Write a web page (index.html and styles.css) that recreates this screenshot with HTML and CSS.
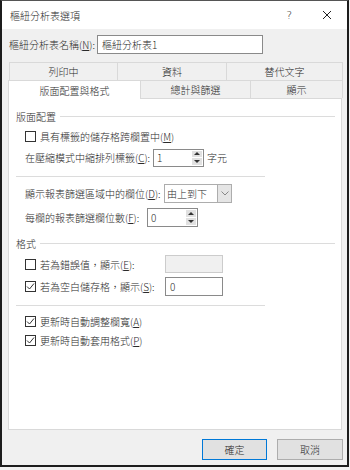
FILE: index.html
```html
<!DOCTYPE html>
<html lang="zh-Hant">
<head>
  <meta charset="UTF-8">
  <meta name="viewport" content="width=device-width, initial-scale=1.0">
  <link rel="stylesheet" href="styles.css">
</head>
<body>
  <div class="window">
    <div class="titlebar">
      <span class="title">樞紐分析表選項</span>
      <span class="help">?</span>
      <span class="close">
        <svg width="10" height="10" viewBox="0 0 10 10"><path d="M1 1 L9 9 M9 1 L1 9" stroke="#222" stroke-width="1"/></svg>
      </span>
    </div>

    <div class="body">
      <div class="name-row">
        <span class="name-label">樞紐分析表名稱(<u>N</u>):</span>
        <div class="textbox name-box">樞紐分析表1</div>
      </div>

      <div class="tabs">
        <div class="tab-row">
          <div class="tab t1">列印中</div>
          <div class="tab t2">資料</div>
          <div class="tab t3">替代文字</div>
        </div>
        <div class="tab-row">
          <div class="tab active t4">版面配置與格式</div>
          <div class="tab t5">總計與篩選</div>
          <div class="tab t6">顯示</div>
        </div>
      </div>

      <div class="panel">
        <div class="section"><span>版面配置</span><div class="line"></div></div>

        <div class="row cb-row r-merge">
          <span class="check"></span>
          <span>具有標籤的儲存格跨欄置中(<u>M</u>)</span>
        </div>

        <div class="row r-indent">
          <span class="lbl w-indent">在壓縮模式中縮排列標籤(<u>C</u>):</span>
          <div class="spinner">
            <span class="val">1</span>
            <div class="spin">
              <span class="up"></span>
              <span class="down"></span>
            </div>
          </div>
          <span class="unit">字元</span>
        </div>

        <div class="sep s1"></div>

        <div class="row r-combo">
          <span class="lbl w-combo">顯示報表篩選區域中的欄位(<u>D</u>):</span>
          <div class="combo">
            <span class="val">由上到下</span>
            <div class="drop">
              <svg width="8" height="5" viewBox="0 0 8 5"><path d="M0.5 0.5 L4 4 L7.5 0.5" fill="none" stroke="#888" stroke-width="1"/></svg>
            </div>
          </div>
        </div>

        <div class="row r-count">
          <span class="lbl w-count">每欄的報表篩選欄位數(<u>F</u>):</span>
          <div class="spinner">
            <span class="val">0</span>
            <div class="spin">
              <span class="up"></span>
              <span class="down"></span>
            </div>
          </div>
        </div>

        <div class="section s-format"><span>格式</span><div class="line"></div></div>

        <div class="row r-error">
          <div class="cb-label">
            <span class="check"></span>
            <span>若為錯誤值，顯示(<u>E</u>):</span>
          </div>
          <div class="textbox small disabled"></div>
        </div>

        <div class="row r-empty">
          <div class="cb-label">
            <span class="check checked"><svg width="9" height="9" viewBox="0 0 9 9"><path d="M1 4.5 L3.5 7 L8 1.5" fill="none" stroke="#333" stroke-width="1"/></svg></span>
            <span>若為空白儲存格，顯示(<u>S</u>):</span>
          </div>
          <div class="textbox small">0</div>
        </div>

        <div class="sep s2"></div>

        <div class="row cb-row r-autofit">
          <span class="check checked"><svg width="9" height="9" viewBox="0 0 9 9"><path d="M1 4.5 L3.5 7 L8 1.5" fill="none" stroke="#333" stroke-width="1"/></svg></span>
          <span>更新時自動調整欄寬(<u>A</u>)</span>
        </div>

        <div class="row cb-row r-keep">
          <span class="check checked"><svg width="9" height="9" viewBox="0 0 9 9"><path d="M1 4.5 L3.5 7 L8 1.5" fill="none" stroke="#333" stroke-width="1"/></svg></span>
          <span>更新時自動套用格式(<u>P</u>)</span>
        </div>
      </div>

      <div class="buttons">
        <div class="button default">確定</div>
        <div class="button">取消</div>
      </div>
    </div>
  </div>
</body>
</html>
```

FILE: styles.css
```css
* {
  box-sizing: border-box;
}
body {
  margin: 0;
  background-color: #f0f0f0;
  font-family: "Noto Sans CJK TC", "Noto Sans", sans-serif;
  font-size: 10px;
  font-weight: 300;
  color: #2a2a2a;
}
u {
  text-decoration: underline;
  text-underline-offset: 1px;
}
.window {
  width: 349px;
  height: 467px;
  border: 2px solid #1c1c1c;
  border-top: 1px solid #555;
  background-color: #f0f0f0;
}
.titlebar {
  height: 28px;
  background-color: #ffffff;
  display: flex;
  align-items: center;
  padding-left: 8px;
}
.title {
  flex: 1;
}
.help {
  font-family: "DejaVu Sans", sans-serif;
  font-size: 11px;
  margin-right: 30px;
  color: #222;
}
.close {
  display: flex;
  margin-right: 15px;
}
.body {
  padding-top: 6px;
}
.name-row {
  display: flex;
  align-items: center;
  height: 19px;
  padding-left: 7px;
}
.name-label {
  width: 88px;
}
.textbox {
  height: 19px;
  border: 1px solid #8a8a8a;
  background-color: #ffffff;
  padding-left: 4px;
  display: flex;
  align-items: center;
}
.name-box {
  width: 166px;
}
.tabs {
  margin-top: 8px;
  margin-left: 6px;
}
.tab-row {
  display: flex;
  height: 18px;
}
.tab {
  display: flex;
  align-items: center;
  justify-content: center;
  border: 1px solid #d9d9d9;
  border-bottom: none;
  background-color: #f0f0f0;
  margin-left: -1px;
}
.t1 { width: 109px; margin-left: 1px; }
.t2 { width: 110px; }
.t3 { width: 117px; }
.t4 { width: 133px; margin-left: 0; }
.t5 { width: 111px; }
.t6 { width: 93px; }
.tab.active {
  background-color: #ffffff;
  height: 19px;
  position: relative;
  z-index: 1;
}
.panel {
  margin-left: 6px;
  width: 334px;
  height: 332px;
  background-color: #ffffff;
  border: 1px solid #d9d9d9;
  padding: 10px 6px 0 7px;
}
.section {
  display: flex;
  align-items: center;
  height: 14px;
}
.section .line {
  flex: 1;
  height: 1px;
  background-color: #dcdcdc;
  margin-left: 4px;
}
.s-format { margin-top: 9px; }
.row {
  display: flex;
  align-items: center;
  padding-left: 9px;
}
.cb-row { height: 14px; }
.r-merge { margin-top: 6px; }
.r-indent { height: 19px; margin-top: 5px; }
.r-combo { height: 19px; margin-top: 7px; }
.r-count { height: 19px; margin-top: 5px; }
.r-error { height: 18px; margin-top: 5px; }
.r-empty { height: 19px; margin-top: 4px; }
.r-autofit { margin-top: 8px; }
.r-keep { margin-top: 5px; }
.sep {
  width: 249px;
  height: 1px;
  background-color: #dcdcdc;
}
.s1 { margin-top: 9px; }
.s2 { margin-top: 9px; }
.check {
  width: 11px;
  height: 11px;
  border: 1px solid #333;
  background-color: #ffffff;
  margin-right: 4px;
  display: flex;
  align-items: center;
  justify-content: center;
}
.cb-label {
  display: flex;
  align-items: center;
  width: 140px;
}
.lbl { white-space: nowrap; }
.w-indent { width: 128px; }
.w-combo { width: 139px; }
.w-count { width: 122px; }
.spinner {
  width: 51px;
  height: 18px;
  border: 1px solid #8a8a8a;
  display: flex;
}
.r-count .spinner { height: 19px; }
.spinner .val {
  flex: 1;
  padding-left: 3px;
  display: flex;
  align-items: center;
}
.spin {
  width: 12px;
  display: flex;
  flex-direction: column;
  border: 1px solid #ffffff;
}
.spin span {
  flex: 1;
  background-color: #e1e1e1;
  display: flex;
  align-items: center;
  justify-content: center;
}
.spin .up { border-bottom: 1px solid #ffffff; }
.spin .up::after {
  content: "";
  border-left: 3px solid transparent;
  border-right: 3px solid transparent;
  border-bottom: 3px solid #333;
}
.spin .down::after {
  content: "";
  border-left: 3px solid transparent;
  border-right: 3px solid transparent;
  border-top: 3px solid #333;
}
.unit { margin-left: 3px; }
.combo {
  width: 68px;
  height: 19px;
  border: 1px solid #adadad;
  display: flex;
}
.combo .val {
  flex: 1;
  padding-left: 2px;
  display: flex;
  align-items: center;
}
.combo .drop {
  width: 14px;
  background-color: #e5e5e5;
  border-left: 1px solid #adadad;
  display: flex;
  align-items: center;
  justify-content: center;
}
.textbox.small {
  width: 58px;
}
.r-error .textbox.small { height: 18px; }
.textbox.disabled {
  background-color: #f0f0f0;
  border-color: #cccccc;
}
.buttons {
  display: flex;
  justify-content: flex-end;
  gap: 10px;
  margin-top: 9px;
  padding-right: 4px;
}
.button {
  width: 66px;
  height: 21px;
  border: 1px solid #adadad;
  background-color: #e1e1e1;
  display: flex;
  align-items: center;
  justify-content: center;
}
.button.default {
  width: 65px;
  border: 1px solid #0078d7;
}
```
